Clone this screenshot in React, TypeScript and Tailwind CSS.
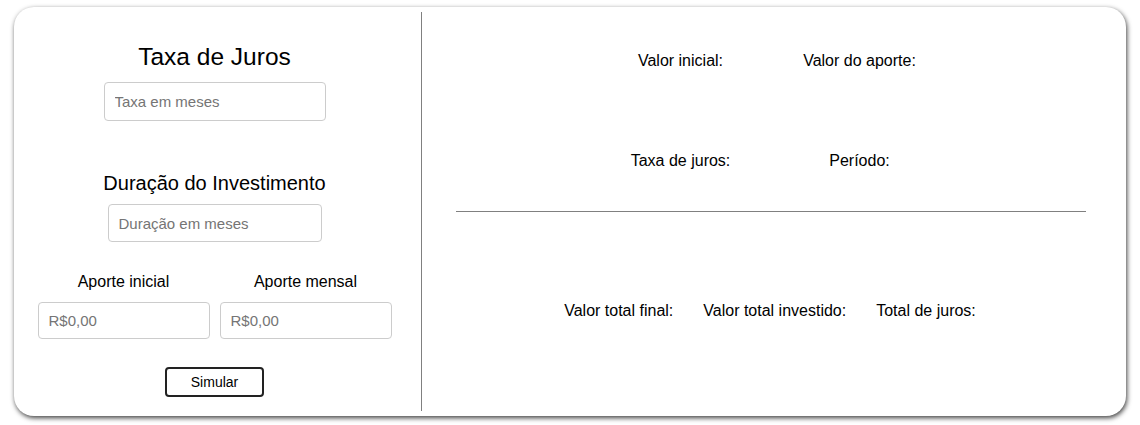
import React from "react";

const font = { fontFamily: '"Liberation Sans", Arial, sans-serif' };

const inputCls =
    "h-full w-full rounded-[4px] border border-[#cccccc] bg-white px-[10px] text-[15px] text-black outline-none placeholder:text-[#757575]";

export default function App() {
    return (
        <div style={font} className="h-[425px] w-[1140px] bg-white pt-[7px] pl-[14px] text-black">
            <div className="flex h-[409px] w-[1112px] rounded-[20px] bg-white py-[5px] shadow-[1px_2px_5px_rgba(0,0,0,0.75)]">
                {/* form */}
                <div className="flex w-[408px] flex-col items-center border-r border-[#808080] pr-[6px]">
                    <h1 className="mt-[31px] text-[24.5px] leading-[28px]">Taxa de Juros</h1>
                    <div className="mt-[11px] h-[39px] w-[222px]">
                        <input className={inputCls} placeholder="Taxa em meses" />
                    </div>

                    <h2 className="mt-[50px] text-[20px] leading-[24px]">Duração do Investimento</h2>
                    <div className="mt-[9px] h-[38px] w-[214px]">
                        <input className={inputCls} placeholder="Duração em meses" />
                    </div>

                    <div className="mt-[31px] grid grid-cols-2 gap-x-[10px]">
                        <div className="flex w-[172px] flex-col items-center">
                            <label className="text-[16px] leading-[18px]">Aporte inicial</label>
                            <div className="mt-[11px] h-[37px] w-full">
                                <input className={inputCls + " text-[14px]"} placeholder="R$0,00" />
                            </div>
                        </div>
                        <div className="flex w-[172px] flex-col items-center">
                            <label className="text-[16px] leading-[18px]">Aporte mensal</label>
                            <div className="mt-[11px] h-[37px] w-full">
                                <input className={inputCls + " text-[14px]"} placeholder="R$0,00" />
                            </div>
                        </div>
                    </div>

                    <button className="mt-[28px] h-[30px] w-[99px] rounded-[4px] border-2 border-[#222] bg-white text-[14px]">
                        Simular
                    </button>
                </div>

                {/* resultados */}
                <div className="flex flex-1 flex-col pl-[34px] pr-[40px] text-[16px] leading-[18px]">
                    <div className="mx-auto mt-[40px] grid w-[358px] -translate-x-[1px] grid-cols-2 text-center">
                        <span>Valor inicial:</span>
                        <span>Valor do aporte:</span>
                    </div>
                    <div className="mx-auto mt-[82px] grid w-[358px] -translate-x-[1px] grid-cols-2 text-center">
                        <span>Taxa de juros:</span>
                        <span>Período:</span>
                    </div>
                    <hr className="mt-[41px] border-t border-[#808080]" />
                    <div className="mt-[90px] flex justify-center gap-[30px] pr-[2px]">
                        <span>Valor total final:</span>
                        <span>Valor total investido:</span>
                        <span>Total de juros:</span>
                    </div>
                </div>
            </div>
        </div>
    );
}
